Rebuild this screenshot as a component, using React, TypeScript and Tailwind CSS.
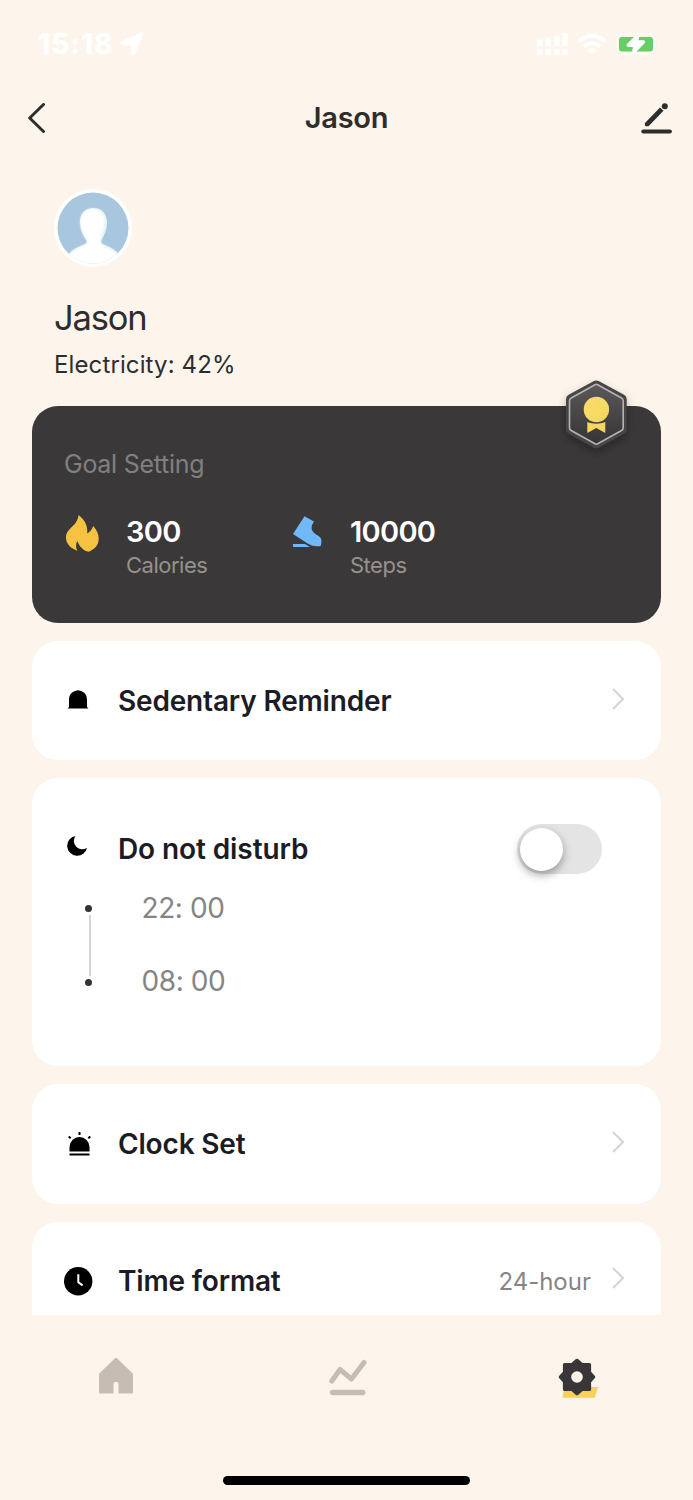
import type { ReactNode } from 'react';

const LocationArrow = () => (
  <svg className="ml-[7px] h-6 w-6" viewBox="0 0 24 24" fill="#fff">
    <path d="M21.2.5 1.6 9.2C-.3 10.1 0 12.400 2 12.600L10.300 13c.5 0 .7.2.7.7l.3 7.900c.2 1.900 2.600 2.300 3.500.5L23.300 3c.8-1.700-.4-3.200-2.100-2.500Z" />
  </svg>
);

const SignalIcon = () => (
  <svg className="h-[22px] w-[31px]" viewBox="0 0 31 22" fill="#fff">
    <rect x="0" y="6.500" width="5.500" height="6.500" rx="1.300" />
    <rect x="8.500" y="4.500" width="5.500" height="8.500" rx="1.300" />
    <rect x="17" y="2.500" width="5.500" height="10.500" rx="1.300" />
    <rect x="25.200" y="0" width="5.500" height="13" rx="1.300" />
    <rect x="0" y="16" width="5.500" height="5.800" rx="1.500" />
    <rect x="8.500" y="16" width="5.500" height="5.800" rx="1.500" />
    <rect x="17" y="16" width="5.500" height="5.800" rx="1.500" />
    <rect x="25.200" y="16" width="5.500" height="5.800" rx="1.500" />
  </svg>
);

const WifiIcon = () => (
  <svg className="ml-[9px] h-[22px] w-[30px]" viewBox="0 0 30 22" fill="none" stroke="#fff" strokeWidth="4">
    <path d="M2 8.200a18.500 18.500 0 0 1 26 0" />
    <path d="M7 13.500a11.500 11.500 0 0 1 16 0" />
    <path d="M10.800 17a6 6 0 0 1 8.400 0L15 21.200Z" fill="#fff" stroke="none" />
  </svg>
);

const BatteryIcon = () => (
  <svg className="ml-[9px] h-6 w-[46px]" viewBox="0 0 46 24">
    <rect x="1" y="2" width="38" height="20" rx="6" fill="none" stroke="#fffaf5" strokeWidth="2" />
    <path d="M42.500 9v6c2.300-1.200 2.300-4.800 0-6Z" fill="#fffaf5" />
    <rect x="3" y="5" width="34" height="14.500" rx="3" fill="#65cf67" />
    <path
      d="M22.500 2.500 12 12.700c-.4.500-.2 1 .5 1h5.800l-1 7.500L27.700 10.500c.4-.5.2-1-.5-1h-6.200l1.500-7Z"
      fill="#fff"
      stroke="#fff"
      strokeWidth="2.500"
      strokeLinejoin="round"
    />
  </svg>
);

const Avatar = () => (
  <svg className="h-[78px] w-[78px]" viewBox="0 0 78 78">
    <defs>
      <clipPath id="face">
        <circle cx="39" cy="39" r="35.500" />
      </clipPath>
      <filter id="soft" x="-20%" y="-20%" width="140%" height="140%">
        <feGaussianBlur stdDeviation="1.300" />
      </filter>
    </defs>
    <circle cx="39" cy="39" r="39" fill="#fff" />
    <g clipPath="url(#face)">
      <rect width="78" height="78" fill="#a8c7de" />
      <path
        d="M39.500 19c-8.500 0-13.500 6-13.500 14 0 8.500 4 14.500 6.700 18.700 1 3.500-3.700 4-8.700 6.300-4 2-8 5-10 9v13h52V67c-2-4-6.500-7-10.500-9-5-2.300-9.500-2.800-8.500-6.300C49.500 47.500 53 41.500 53 33c0-8-5-14-13.500-14Z"
        fill="#e3f3f6"
      />
      <path
        d="M39 20c-8 0-12.500 5.500-12.500 12.500 0 8.500 4 14.500 7 19 1 4-3.500 5-8.500 7.300C20 61 17 63 13 67v20h52V68c-2-4-6-6.500-10-8.500-5-2.300-9-3.500-8-8C46.500 47 50.500 41.500 50.500 33c0-7-4-13-11.500-13Z"
        fill="#fff"
        filter="url(#soft)"
      />
    </g>
  </svg>
);

const Medal = () => (
  <svg className="absolute -top-[32px] right-[26px] h-[84px] w-[76px]" viewBox="0 0 76 84">
    <defs>
      <linearGradient id="badge" x1="0" y1="0" x2="0" y2="1">
        <stop offset="0" stopColor="#5a5858" />
        <stop offset="1" stopColor="#353333" />
      </linearGradient>
      <linearGradient id="gold" x1="0" y1="0" x2="1" y2="1">
        <stop offset="0" stopColor="#f8dd6e" />
        <stop offset="1" stopColor="#f6d65c" />
      </linearGradient>
      <filter id="drop" x="-20%" y="-20%" width="140%" height="150%">
        <feDropShadow dx="0" dy="4" stdDeviation="4" floodColor="#000" floodOpacity=".32" />
      </filter>
    </defs>
    <path
      d="M34.500 7.300a6 6 0 0 1 5.600 0L65 20.700a5 5 0 0 1 2.700 4.500v30a5 5 0 0 1-2.700 4.500L40.100 73.500a6 6 0 0 1-5.600 0L9.700 59.700A5 5 0 0 1 7 55.200v-30a5 5 0 0 1 2.700-4.500Z"
      fill="#474545"
      filter="url(#drop)"
    />
    <path
      d="M36 10.700a3 3 0 0 1 2.700 0L62.500 24a3 3 0 0 1 1.700 2.800v27a3 3 0 0 1-1.700 2.700L38.700 69.800a3 3 0 0 1-2.700 0L12.200 56.500a3 3 0 0 1-1.700-2.700v-27a3 3 0 0 1 1.700-2.800Z"
      fill="url(#badge)"
      stroke="#b5b4b4"
      strokeWidth="1.600"
    />
    <circle cx="37.400" cy="35.500" r="12.700" fill="url(#gold)" />
    <path d="M28.300 48c5.500 2.200 12.500 2.200 18 0v11l-9-5-9 5Z" fill="#f6d65c" />
  </svg>
);

const FlameIcon = () => (
  <svg className="h-[37px] w-[33px]" viewBox="0 0 33 37" fill="#f5c242">
    <path d="M12.500 0c6.500 5 9.500 11 8.700 18.500 3-2 5-4.500 6-7.500 3.500 4 5.500 8 5.500 12.500 0 7-4 10.500-10 13.200-5.500-1-9-5-11.500-10.700-1.500 3.500-1.500 6.500 0 9.700C4 33 0 28.500 0 22.500 0 13 11.500 11.500 12.500 0Z" />
  </svg>
);

const BootIcon = () => (
  <svg className="h-[31px] w-[29px]" viewBox="0 0 29 31" fill="#70b8f8">
    <path d="M11.500.3 21 5.500c-3.200 4.500-3.200 8.500.2 11.500 3 2.500 7.300 3.500 7.300 8 0 1.600-.3 3.500-.8 5-4.700.8-8.700.1-12.700-2.200L0 18Z" />
    <path d="M0 28h12l5 3H0Z" />
  </svg>
);

const BellIcon = () => (
  <svg className="h-[19px] w-[22px]" viewBox="0 0 22 19">
    <path d="M9 .8c1.200-.8 2.800-.8 4 0 4.500 1 7 4.200 7 9.200v7l1.500 1.500H.5L2 17v-7C2 5 4.500 1.800 9 .8Z" />
  </svg>
);

const MoonIcon = () => (
  <svg className="h-5 w-5" viewBox="0 0 20 20">
    <path d="M8.500 0A10 10 0 1 0 20 11.700 8.300 8.300 0 0 1 8.500 0Z" />
  </svg>
);

const AlarmIcon = () => (
  <svg className="h-[24px] w-[23px]" viewBox="0 0 23 24">
    <path d="M1.500 19.500V15a10 10 0 0 1 20 0v4.500Z" />
    <path d="M1.500 22.500h20" stroke="#000" strokeWidth="2" />
    <path d="M11.500 0v3M.7 4.500l2 1.700M22.300 4.500l-2 1.700" stroke="#000" strokeWidth="2" />
  </svg>
);

const ClockIcon = () => (
  <svg className="h-[29px] w-[29px]" viewBox="0 0 29 29">
    <circle cx="14.200" cy="14.300" r="14.200" />
    <path d="M14.300 7.300v7.900l4.300 3.200" fill="none" stroke="#fff" strokeWidth="2" />
  </svg>
);

const Chevron = () => (
  <svg className="h-[22px] w-[13px]" viewBox="0 0 13 22" fill="none" stroke="#d6d6d6" strokeWidth="2.200">
    <path d="m1 1 10 10L1 21" />
  </svg>
);

const HomeIcon = () => (
  <svg className="h-9 w-[34px]" viewBox="0 0 34 36" fill="#c6bcb4">
    <path d="M15.500.7a2 2 0 0 1 3 0L33.200 15c.5.500.8 1 .8 1.700V34a1.500 1.500 0 0 1-1.500 1.500h-13V26a2 2 0 0 0-2-2h-1a2 2 0 0 0-2 2v9.500h-13A1.500 1.500 0 0 1 0 34V16.700c0-.7.3-1.200.8-1.700Z" />
  </svg>
);

const ChartIcon = () => (
  <svg
    className="ml-[5px] h-[38px] w-[38px]"
    viewBox="0 0 38 38"
    fill="none"
    stroke="#c6bcb4"
    strokeWidth="5"
    strokeLinecap="round"
    strokeLinejoin="round"
  >
    <path d="M2.800 23 11 11.500 22.500 21 35 4.500" />
    <path d="M3.700 34.500h30" strokeWidth="5.500" />
  </svg>
);

const GearIcon = () => (
  <svg className="h-10 w-10" viewBox="0 0 40 40">
    <path d="M6.500 29H40l-3.300 10.700H4.500Z" fill="#f9d05a" />
    <path
      d="m19 2.300 4.800 4.200h7.700v7.700l4.200 4.800-4.200 4.800v7.700h-7.700L19 35.700l-4.800-4.200H6.500v-7.700L2.300 19l4.200-4.800V6.500h7.700Z"
      fill="#383636"
      stroke="#383636"
      strokeWidth="3.200"
      strokeLinejoin="round"
    />
    <circle cx="19" cy="19" r="5.800" fill="#fdf4eb" />
  </svg>
);

interface RowProps {
  icon: ReactNode;
  label: string;
  value?: string;
  className: string;
  chevron: string;
}

const Row = ({ icon, label, value, className, chevron }: RowProps) => (
  <section className={`flex w-[629px] shrink-0 items-center rounded-[26px] bg-white pr-9 pl-8 ${className}`}>
    <div className="flex w-[54px]">{icon}</div>
    <h3 className="text-[28px] font-semibold tracking-[-0.170px] text-[#1c1c24]">{label}</h3>
    <div className="ml-auto flex items-center">
      {value && <span className="mt-px mr-[21px] text-[24px] text-[#858585]">{value}</span>}
      <div className={chevron}>
        <Chevron />
      </div>
    </div>
  </section>
);

export default function App() {
  return (
    <div className="flex h-[1500px] w-[693px] flex-col overflow-hidden bg-[#fdf4eb] font-['Inter',sans-serif] text-[#2d2d2d]">
      {/* Status bar */}
      <div className="flex h-[88px] shrink-0 items-center justify-between pr-[31px] pl-[38px]">
        <div className="flex items-center">
          <span className="text-[28px] font-extrabold tracking-[0.800px] text-white">15:18</span>
          <LocationArrow />
        </div>
        <div className="flex items-center">
          <SignalIcon />
          <WifiIcon />
          <BatteryIcon />
        </div>
      </div>

      {/* Header */}
      <header className="flex h-[60px] shrink-0 items-center justify-between pr-[21px] pl-[27px]">
        <svg className="h-[30px] w-[25px]" viewBox="0 0 25 30" fill="none" stroke="#2d2d2d" strokeWidth="3" strokeLinecap="round" strokeLinejoin="round">
          <path d="M16.500 1.500 2.700 15l13.800 13.500" />
        </svg>
        <h1 className="text-[29px] font-semibold tracking-[-0.300px]">Jason</h1>
        <svg className="h-[31px] w-[31px]" viewBox="0 0 31 31" fill="#2d2d2d">
          <path d="M2.300 28.500h26.600" stroke="#2d2d2d" strokeWidth="4" strokeLinecap="round" />
          <path d="m4 20 15-15.500 3.500 3.300L8 22.700c-.5.400-1 .5-1.500.5H5a1 1 0 0 1-1-1Z" />
          <circle cx="23.800" cy="3.200" r="3" />
        </svg>
      </header>

      {/* Profile */}
      <div className="h-[258px] shrink-0 pt-[41px] pl-[54px]">
        <Avatar />
        <h2 className="mt-[29px] text-[34.500px] leading-[44px] tracking-[-1.200px]">Jason</h2>
        <p className="mt-[9px] text-[24px] leading-[32px] tracking-[0.120px]">Electricity: 42%</p>
      </div>

      {/* Settings list */}
      <main className="flex h-[909px] shrink-0 flex-col gap-[18px] px-8">
        <section className="relative h-[217px] w-[629px] shrink-0 rounded-[26px] bg-[#3b3839] pt-[42px] pl-8">
          <Medal />
          <h3 className="text-[25px] leading-[32px] tracking-[-0.270px] text-[#818080]">Goal Setting</h3>
          <div className="mt-[34px] flex">
            <div className="flex w-[228px]">
              <div className="w-[62px] pt-px pl-[2px]">
                <FlameIcon />
              </div>
              <div>
                <p className="text-[29px] leading-[36px] font-semibold tracking-[-0.700px] text-white">300</p>
                <p className="text-[22px] leading-[30px] tracking-[-0.500px] text-[#96918d]">Calories</p>
              </div>
            </div>
            <div className="flex">
              <div className="w-[58px] pt-[2px] pl-px">
                <BootIcon />
              </div>
              <div>
                <p className="text-[29px] leading-[36px] font-semibold tracking-[-0.700px] text-white">10000</p>
                <p className="text-[22px] leading-[30px] tracking-[-0.500px] text-[#96918d]">Steps</p>
              </div>
            </div>
          </div>
        </section>

        <Row
          icon={<div className="-mt-[3px] pl-[3px]"><BellIcon /></div>}
          label="Sedentary Reminder"
          className="h-[119px]"
          chevron="-mt-[3px]"
        />

        <section className="h-[288px] w-[629px] shrink-0 rounded-[26px] bg-white pt-[46px] pl-8">
          <div className="flex h-[50px] items-center pr-[59px]">
            <div className="-mt-[6px] w-[54px] pl-[3px]">
              <MoonIcon />
            </div>
            <h3 className="text-[28px] font-semibold tracking-[-0.100px] text-[#1c1c24]">Do not disturb</h3>
            <button className="ml-auto h-[50px] w-[85px] rounded-full bg-[#e4e4e4] p-[3px]">
              <span className="block h-[43px] w-[43px] rounded-full bg-white shadow-[0_4px_10px_rgba(0,0,0,0.35)]" />
            </button>
          </div>
          <div className="mt-[16px] flex pl-[21px]">
            <div className="flex w-[56.500px] flex-col items-start pt-[15px]">
              <span className="h-[7px] w-[7px] rounded-full bg-[#333]" />
              <span className="my-[3px] ml-[3.500px] h-[61px] w-[2px] bg-[#d4d4d4]" />
              <span className="h-[7px] w-[7px] rounded-full bg-[#333]" />
            </div>
            <div className="text-[28px] tracking-[-0.400px] text-[#858585]">
              <p className="h-[73px] leading-[36px]">22: 00</p>
              <p className="leading-[36px]">08: 00</p>
            </div>
          </div>
        </section>

        <Row
          icon={<div className="pl-1"><AlarmIcon /></div>}
          label="Clock Set"
          className="h-[119.5px]"
          chevron="-mt-[3px]"
        />

        <Row
          icon={<ClockIcon />}
          label="Time format"
          value="24-hour"
          className="h-[93.5px] rounded-b-none pt-[26px]"
          chevron="-mt-[7px]"
        />
      </main>

      {/* Tab bar */}
      <nav className="flex h-[161px] items-start justify-between pt-[42.5px] pr-[95px] pl-[98.5px]">
        <HomeIcon />
        <ChartIcon />
        <GearIcon />
      </nav>
      <div className="mx-auto h-[9px] w-[247px] shrink-0 rounded-full bg-black" />
      <div className="h-[14px] shrink-0" />
    </div>
  );
}
